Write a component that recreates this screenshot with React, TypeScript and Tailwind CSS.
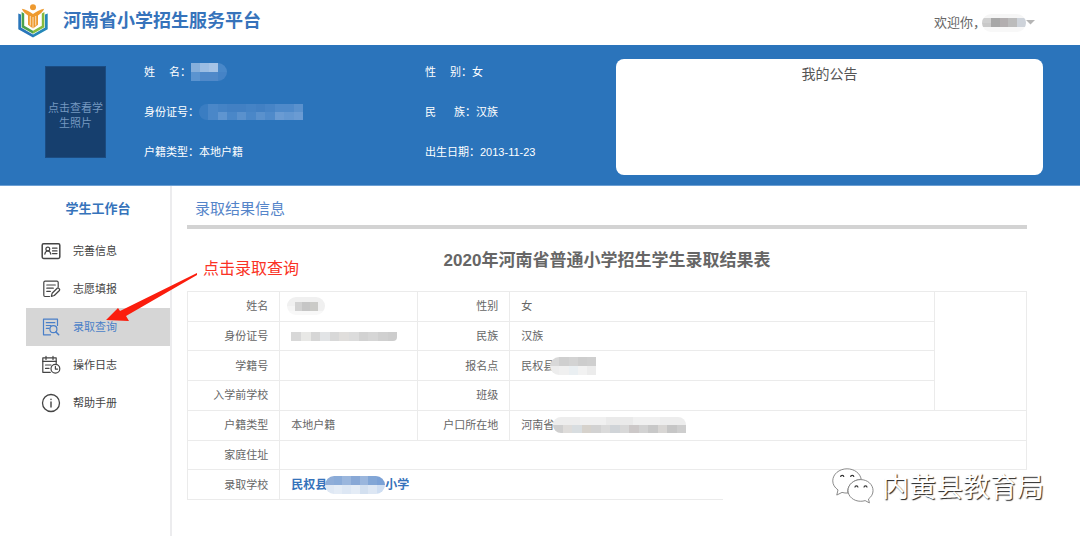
import React from 'react';
import clsx from 'clsx';

const iconProps = {
  width: 20,
  height: 20,
  viewBox: '0 0 20 20',
  fill: 'none',
  stroke: 'currentColor',
  strokeWidth: 1.2,
  strokeLinecap: 'round' as const,
  strokeLinejoin: 'round' as const,
  'aria-hidden': true,
};

function ProfileIcon() {
  return (
    <svg {...iconProps}>
      <rect x="1.2" y="2.8" width="17.6" height="14.6" rx="1.4" strokeWidth="1.5" />
      <circle cx="6.8" cy="8" r="1.9" />
      <path d="M3.8 13.2c.3-2.1 1.4-3.2 3-3.2s2.7 1.1 3 3.2" />
      <path d="M11.5 7.2H16M11.5 9.9H16M11.5 12.6H16" />
    </svg>
  );
}

function FormIcon() {
  return (
    <svg {...iconProps}>
      <path d="M17.2 8V3.4A1.2 1.2 0 0 0 16 2.2H4a1.2 1.2 0 0 0-1.2 1.2v12.9A1.2 1.2 0 0 0 4 17.5h4.5" />
      <path d="M5.8 6h8.5M5.8 9.2h6.5M5.8 12.4h3.5" />
      <path d="M10.3 17.3l.8-3 5.1-5a1.1 1.1 0 0 1 1.5 0l.7.7a1.1 1.1 0 0 1 0 1.5l-5.1 5z" />
    </svg>
  );
}

function SearchDocIcon() {
  return (
    <svg {...iconProps}>
      <path d="M16.5 8.5V2.200H2.500v15.600h7" />
      <path d="M5.300 5.700h8.500M5.300 8.500h4.500M5.300 11.300h2.800" />
      <circle cx="12.4" cy="12.2" r="3.5" />
      <path d="M15 14.9l2.7 2.9" strokeWidth="1.5" />
    </svg>
  );
}

function LogIcon() {
  return (
    <svg {...iconProps}>
      <path d="M15.200 8.500V2.900H1.800v14.400h7.500" />
      <path d="M5 1.400v3M12 1.400v3M1.800 6.400h13.400M4.500 10H10M4.500 13.400H8" />
      <circle cx="14.4" cy="13.8" r="4.4" />
      <path d="M14.4 11.4v2.7h2.200" />
    </svg>
  );
}

function HelpIcon() {
  return (
    <svg {...iconProps}>
      <circle cx="10" cy="10" r="8.5" strokeWidth="1.3" />
      <path d="M10 9v5M10 6.200v.3" strokeWidth="1.4" />
    </svg>
  );
}

function Logo() {
  return (
    <svg width="30" height="34" viewBox="0 0 30 34" aria-hidden="true">
      <circle cx="15" cy="3.2" r="3" fill="#ee9a2f" />
      <path d="M.3 9.500l2.700 1v13L15 30.400v3.100L.3 25.200z" fill="#2a76bb" />
      <path d="M29.700 9.500l-2.700 1v13L15 30.400v3.100l14.700-8.300z" fill="#2588b8" />
      <path d="M3.600 8l2.600 1.400v12.300l8.800 5.100v3L3.600 23.200z" fill="#4ba24c" />
      <path d="M26.400 8l-2.600 1.400v12.300L15 26.800v3l11.400-6.600z" fill="#86bb3e" />
      <path d="M3.800 4.800c4 .9 7.800 2.600 11.200 5.200 3.400-2.600 7.200-4.300 11.200-5.200-1.200 2.800-3.400 4.800-6.200 6.700v9.300L15 24.600l-5-3.800v-9.300C7.200 9.600 5 7.600 3.800 4.800z" fill="#ee9a2f" />
      <path d="M15 13v11.500M12.300 12v9.500M17.700 12v9.500" stroke="#fff" strokeWidth=".7" />
    </svg>
  );
}

type MosaicProps = {
  rows: string[][];
  className?: string;
};

// Blocks that hide personal data, one background class per cell
function Mosaic({ rows, className }: MosaicProps) {
  return (
    <span className={clsx('flex shrink-0 flex-col overflow-hidden', className)} aria-hidden="true">
      {rows.map((cells, r) => (
        <span key={r} className="flex flex-1">
          {cells.map((cell, c) => (
            <span key={c} className={clsx('flex-1', cell)} />
          ))}
        </span>
      ))}
    </span>
  );
}

const menu = [
  { label: '完善信息', icon: ProfileIcon },
  { label: '志愿填报', icon: FormIcon },
  { label: '录取查询', icon: SearchDocIcon, active: true },
  { label: '操作日志', icon: LogIcon },
  { label: '帮助手册', icon: HelpIcon },
];

type FieldProps = {
  label: string;
  width?: string;
  children: React.ReactNode;
};

function Field({ label, width = 'w-11', children }: FieldProps) {
  return (
    <div className="flex h-5 items-center">
      <dt className="flex">
        <span className={clsx('flex justify-between', width)}>
          {label.split('').map((char) => (
            <span key={char}>{char}</span>
          ))}
        </span>
        ：
      </dt>
      <dd>{children}</dd>
    </div>
  );
}

function Label({ children }: { children: React.ReactNode }) {
  return (
    <th scope="row" className="border border-[#ebebeb] pr-[11px] text-right font-normal">
      {children}
    </th>
  );
}

function Value({ children, colSpan }: { children?: React.ReactNode; colSpan?: number }) {
  return (
    <td colSpan={colSpan} className="border border-[#ebebeb] pl-[11px]">
      <div className="flex h-5 items-center">{children}</div>
    </td>
  );
}

function Header() {
  return (
    <header className="flex h-[45px] items-center justify-between pr-[45px] pl-[18px]">
      <div className="flex items-center gap-[15px] pb-1">
        <Logo />
        <h1 className="text-[18px] leading-6 font-bold text-[#3673bb]">河南省小学招生服务平台</h1>
      </div>
      <button type="button" className="flex items-center text-[13px] text-[#666]">
        欢迎你，
        <Mosaic
          className="-ml-1 h-[18px] w-[44px] rounded-full"
          rows={[
            ['bg-[#f6f6f6]'],
            ['bg-[#d0d0d0]', 'bg-[#a8a8a8]', 'bg-[#b3afb0]', 'bg-[#bcbcbc]', 'bg-[#ced3da]'],
            ['bg-[#c9c9c9]', 'bg-[#a8a8a8]', 'bg-[#b3afb0]', 'bg-[#bcbcbc]', 'bg-[#ced3da]'],
            ['bg-[#f8f8f8]'],
          ]}
        />
        <svg width="9" height="5" viewBox="0 0 9 5" aria-hidden="true">
          <path d="M0 0h9L4.500 4.500z" fill="#b5b5b5" />
        </svg>
      </button>
    </header>
  );
}

function StudentBanner() {
  return (
    <section className="grid grid-cols-[99px_281fr_191fr_427fr] border-b border-[#6c9fd3] bg-[#2b74bb] pt-[14px] pr-[37px] pb-[10px] pl-[45px] text-[11px] text-white">
      <button
        type="button"
        className="mt-[7px] h-[92px] w-[61px] border border-[#1b4c82] bg-[#163f6e] px-[2px] pt-2 leading-[15px] text-[#7598c0]"
      >
        点击查看学生照片
      </button>
      <dl className="flex flex-col gap-5 pt-[3px]">
        <Field label="姓名" width="w-9">
          <Mosaic
            className="h-[18px] w-9 rounded-r-full"
            rows={[
              ['bg-[#86afdb]', 'bg-[#9bbde3]', 'bg-[#a5c3e6]', 'bg-[#4988c9]'],
              ['bg-[#5b94d0]', 'bg-[#5089c9]', 'bg-[#5089c9]', 'bg-[#4583c6]'],
            ]}
          />
        </Field>
        <Field label="身份证号">
          <Mosaic
            className="h-4 w-[104px] rounded-l-full"
            rows={[
              ['bg-[#3a7dc2]', 'bg-[#4a87c8]', 'bg-[#4583c5]', 'bg-[#4280c3]', 'bg-[#4280c3]', 'bg-[#4583c5]', 'bg-[#4280c3]', 'bg-[#4784c6]', 'bg-[#4f8aca]', 'bg-[#4f8aca]', 'bg-[#5a91cd]'],
              ['bg-[#3a7dc2]', 'bg-[#4a87c8]', 'bg-[#5f95d0]', 'bg-[#4a87c8]', 'bg-[#5a91cd]', 'bg-[#4a87c8]', 'bg-[#5a91cd]', 'bg-[#4f8aca]', 'bg-[#6a9bd3]', 'bg-[#6397d1]', 'bg-[#6a9bd3]'],
            ]}
          />
        </Field>
        <Field label="户籍类型">本地户籍</Field>
      </dl>
      <dl className="flex flex-col gap-5 pt-[3px]">
        <Field label="性别" width="w-9">女</Field>
        <Field label="民族" width="w-10">汉族</Field>
        <Field label="出生日期">2013-11-23</Field>
      </dl>
      <div className="h-[116px] rounded-lg bg-white pt-[5px] text-center">
        <h2 className="text-[14px] leading-5 text-[#555]">我的公告</h2>
      </div>
    </section>
  );
}

function Sidebar() {
  return (
    <nav className="w-[172px] shrink-0 border-r-2 border-[#ececee] pt-[13px] pl-[26px]">
      <h2 className="text-center text-[13px] leading-5 font-bold text-[#3673bb]">学生工作台</h2>
      <ul className="mt-[13px]">
        {menu.map(({ label, icon: Icon, active }) => (
          <li key={label}>
            <a
              href="#"
              className={clsx(
                'flex h-[38px] items-center gap-3 pl-[15px] text-[11px]',
                active ? 'bg-[#d6d6d6] text-[#4a7fc8]' : 'text-[#444]'
              )}
            >
              <Icon />
              {label}
            </a>
          </li>
        ))}
      </ul>
    </nav>
  );
}

function ResultTable() {
  return (
    <table className="mt-[18px] h-[209px] w-full table-fixed border-collapse text-[11px] leading-4 text-[#666]">
      <colgroup>
        <col className="w-[11%]" />
        <col className="w-[16.4%]" />
        <col className="w-[11%]" />
        <col />
        <col className="w-[11%]" />
      </colgroup>
      <tbody>
        <tr>
          <Label>姓名</Label>
          <Value>
            <Mosaic
              className="-ml-1 h-[18px] w-[38px] rounded-full"
              rows={[
                ['bg-[#f0f0f0]'],
                ['bg-[#f0f0f0]', 'bg-[#d2d2d2]', 'bg-[#c6c6c6]', 'bg-[#cbcbc8]', 'bg-[#f0f0f0]'],
                ['bg-[#f5f5f5]', 'bg-[#d2d2d2]', 'bg-[#c6c6c6]', 'bg-[#cbcbc8]', 'bg-[#f0f0f0]'],
                ['bg-[#f8f8f8]'],
              ]}
            />
          </Value>
          <Label>性别</Label>
          <Value>女</Value>
          <td rowSpan={4} className="border border-[#ebebeb]" />
        </tr>
        <tr>
          <Label>身份证号</Label>
          <Value>
            <Mosaic
              className="h-[9px] w-[106px] rounded-br-sm"
              rows={[
                ['bg-[#d8d8d8]', 'bg-[#e8e8e6]', 'bg-[#d6d6d6]', 'bg-[#e2e4e6]', 'bg-[#d8d8d8]', 'bg-[#e0dedc]', 'bg-[#dcdcdc]', 'bg-[#d2d2d2]', 'bg-[#d6d6d6]', 'bg-[#d0d0d0]', 'bg-[#cdcdcd]'],
              ]}
            />
          </Value>
          <Label>民族</Label>
          <Value>汉族</Value>
        </tr>
        <tr>
          <Label>学籍号</Label>
          <Value />
          <Label>报名点</Label>
          <Value>
            民权县
            <Mosaic
              className="-ml-1 h-[18px] w-[46px] rounded-l-full"
              rows={[
                ['bg-[#d8d8d8]', 'bg-[#cfcfcf]', 'bg-[#d3d3d3]', 'bg-[#cdcdcd]', 'bg-[#cfcfcf]'],
                ['bg-[#ededed]', 'bg-[#f0f0f0]', 'bg-[#eaeff2]', 'bg-[#f2f2f2]', 'bg-[#ececec]'],
              ]}
            />
          </Value>
        </tr>
        <tr>
          <Label>入学前学校</Label>
          <Value />
          <Label>班级</Label>
          <Value />
        </tr>
        <tr>
          <Label>户籍类型</Label>
          <Value>本地户籍</Value>
          <Label>户口所在地</Label>
          <Value colSpan={2}>
            河南省
            <Mosaic
              className="-ml-px h-4 w-[133px] rounded-l-full rounded-tr-full"
              rows={[
                ['bg-[#ededed]', 'bg-[#f0f0f0]', 'bg-[#eaeaea]', 'bg-[#f0f0f0]', 'bg-[#ededed]'],
                ['bg-[#cfcfcf]', 'bg-[#dedcda]', 'bg-[#d8dde0]', 'bg-[#d6d2cc]', 'bg-[#d2d2d2]', 'bg-[#dadada]', 'bg-[#d0d4d8]', 'bg-[#d8d8d8]', 'bg-[#ccc8c8]', 'bg-[#d2d2d2]', 'bg-[#c8c8c8]', 'bg-[#d8d6d4]', 'bg-[#c6c6c6]', 'bg-[#cecece]'],
              ]}
            />
          </Value>
        </tr>
        <tr>
          <Label>家庭住址</Label>
          <Value colSpan={4} />
        </tr>
        <tr>
          <Label>录取学校</Label>
          <Value colSpan={4}>
            <strong className="flex items-center text-[12px] text-[#3673bb]">
              民权县
              <Mosaic
                className="-ml-[2px] h-[18px] w-[60px] rounded-full"
                rows={[
                  ['bg-[#8fadd8]', 'bg-[#8aabd8]', 'bg-[#9ab6dd]', 'bg-[#88a8d6]', 'bg-[#9ab6dd]', 'bg-[#82a6d6]', 'bg-[#7ba1d6]'],
                  ['bg-[#dfe8f4]', 'bg-[#e4ecf6]', 'bg-[#dde7f4]', 'bg-[#e4ecf6]', 'bg-[#d3e0f0]', 'bg-[#dde7f4]', 'bg-[#cfdef2]'],
                ]}
              />
              小学
            </strong>
          </Value>
        </tr>
      </tbody>
    </table>
  );
}

// Red hint that points from the page to the active menu entry
function Hint() {
  return (
    <div className="pointer-events-none absolute top-[73px] left-[105px] flex items-start gap-[5px] text-[#fa3225]">
      <svg className="mt-[12px]" width="93" height="52" viewBox="0 0 93 52" aria-hidden="true">
        <path d="M1 49L13 37L15 40L92 2V4L21 45L24 50z" fill="#fb1d0d" />
      </svg>
      <span className="text-[16px] leading-5">点击录取查询</span>
    </div>
  );
}

function Watermark() {
  return (
    <div className="absolute top-[284px] right-0 flex w-[357px] items-start justify-end gap-2 bg-white pr-9 pb-2">
      <svg className="-mt-[3px]" width="42" height="38" viewBox="0 0 44 38" fill="#fff" stroke="#777" strokeWidth=".9" aria-hidden="true">
        <path d="M5 28.5l1.300-5.400C2.800 20.600.8 17.400.8 13.600.8 6.600 7.500 1 15.800 1c7.500 0 13.800 4.700 14.800 11-8 .4-14.100 5.800-14.100 12.400 0 .8.100 1.400.2 2-2.200.1-4.200-.1-6.200-.7z" />
        <path d="M30 12.300c7.200 0 13 5.100 13 11.500 0 3.600-1.900 6.700-4.800 8.800l1 4.100-4.500-2.400c-1.500.5-3 .7-4.700.7-7.300 0-13.200-5-13.200-11.200S22.700 12.300 30 12.300z" />
        <path d="M9 9.500a1.700 1.700 0 0 1 3.400 0M19.500 9.500a1.700 1.700 0 0 1 3.400 0M24 20.500a1.600 1.600 0 0 1 3.200 0M33.500 20.500a1.600 1.600 0 0 1 3.200 0" stroke="#333" strokeWidth="1.200" />
      </svg>
      <span className="text-[27px] leading-9 text-white [text-shadow:1px_1px_1px_#222]">内黄县教育局</span>
    </div>
  );
}

export default function App() {
  return (
    <div className="flex min-h-screen flex-col bg-white font-['Liberation_Sans','Noto_Sans_CJK_SC',sans-serif]">
      <Header />
      <StudentBanner />
      <div className="relative flex flex-1">
        <Sidebar />
        <main className="flex-1 pt-[13px] pr-[53px] pl-[15px]">
          <h2 className="border-b-4 border-[#d3d3d3] pb-[6px] pl-2 text-[15px] leading-5 text-[#5585c9]">录取结果信息</h2>
          <h3 className="mt-5 text-center text-[17px] leading-6 font-bold text-[#666]">2020年河南省普通小学招生学生录取结果表</h3>
          <ResultTable />
        </main>
        <Hint />
        <Watermark />
      </div>
    </div>
  );
}
